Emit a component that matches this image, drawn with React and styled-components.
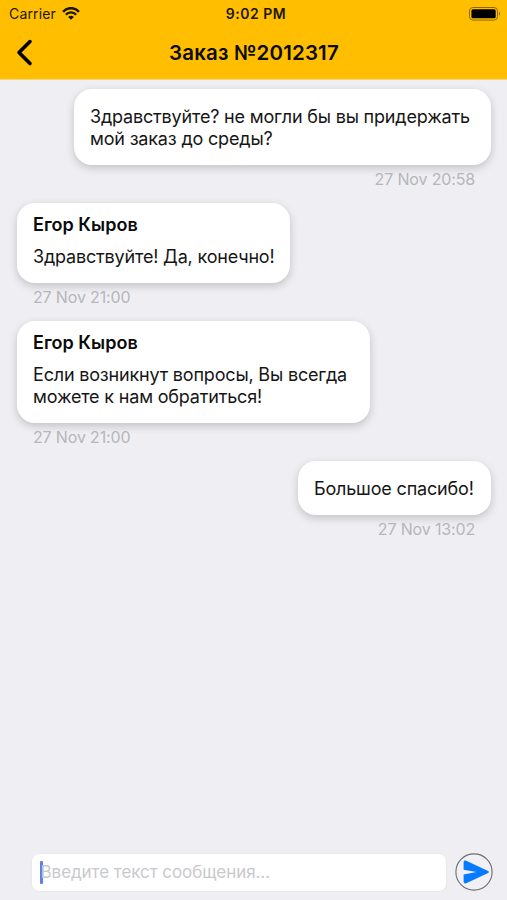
import React, { useState } from "react";
import styled, { createGlobalStyle } from "styled-components";

const messages = [
  {
    id: 1,
    mine: true,
    width: 417,
    text: "Здравствуйте? не могли бы вы придержать\nмой заказ до среды?",
    time: "27 Nov 20:58",
  },
  {
    id: 2,
    author: "Егор Кыров",
    width: 273,
    text: "Здравствуйте! Да, конечно!",
    time: "27 Nov 21:00",
  },
  {
    id: 3,
    author: "Егор Кыров",
    width: 353,
    text: "Если возникнут вопросы, Вы всегда\nможете к нам обратиться!",
    time: "27 Nov 21:00",
  },
  {
    id: 4,
    mine: true,
    width: 193,
    text: "Большое спасибо!",
    time: "27 Nov 13:02",
  },
];

function WifiIcon() {
  return (
    <svg width="18" height="13" viewBox="0 0 18 13" fill="none">
      <path d="M1.1 4.9C5.3 -0.1 12.7 -0.1 16.9 4.9" stroke="#1c1600" strokeWidth="2.5" />
      <path d="M3.9 7.8C6.6 4.6 11.4 4.6 14.1 7.8" stroke="#1c1600" strokeWidth="2.3" />
      <path d="M6.1 9.9C7.7 8.3 10.3 8.3 11.9 9.9L9 12.8Z" fill="#1c1600" />
    </svg>
  );
}

function BatteryIcon() {
  return (
    <svg width="32" height="14" viewBox="0 0 32 14" fill="none">
      <rect x="0.5" y="0.5" width="28" height="12.6" rx="3.4" stroke="#8a6800" />
      <rect x="2.4" y="2.3" width="24.3" height="9" rx="1.6" fill="#000" />
      <path d="M30 4.8C31.4 5.4 31.4 8.2 30 8.8Z" fill="#8a6800" />
    </svg>
  );
}

function Chat() {
  const [draft, setDraft] = useState("");

  return (
    <Wrapper>
      <GlobalStyle />
      <Header>
        <StatusBar>
          <Carrier>
            Carrier
            <WifiIcon />
          </Carrier>
          <Clock>9:02 PM</Clock>
          <Battery>
            <BatteryIcon />
          </Battery>
        </StatusBar>
        <Nav>
          <BackButton aria-label="Назад">
            <svg width="18" height="28" viewBox="0 0 18 28" fill="none">
              <path
                d="M15 2.6L4 13.6L15 24.6"
                stroke="#000"
                strokeWidth="3.6"
                strokeLinecap="round"
                strokeLinejoin="round"
              />
            </svg>
          </BackButton>
          <Title>Заказ №2012317</Title>
        </Nav>
      </Header>

      <Messages>
        {messages.map((msg) => (
          <Message key={msg.id} $mine={msg.mine}>
            <Bubble $named={!!msg.author} $width={msg.width}>
              {msg.author && <Author>{msg.author}</Author>}
              <Text>{msg.text}</Text>
            </Bubble>
            <Time>{msg.time}</Time>
          </Message>
        ))}
      </Messages>

      <Footer>
        <Field>
          <Caret />
          <Input
            value={draft}
            onChange={(e) => setDraft(e.target.value)}
            placeholder="Введите текст сообщения..."
          />
        </Field>
        <SendButton aria-label="Отправить">
          <svg width="38" height="38" viewBox="0 0 38 38" fill="none">
            <circle cx="19" cy="19" r="18.1" fill="#f1f1f5" stroke="#6e6e72" strokeWidth="1.1" />
            <path
              d="M8.6 9.4C8.6 7.8 9.8 7.2 11.2 7.8L33.2 18.1C34.1 18.6 34.1 19.4 33.2 19.9L11.2 30.2C9.8 30.8 8.6 30.2 8.6 28.6V21.4L21.5 19L8.6 16.8Z"
              fill="#087aff"
            />
          </svg>
        </SendButton>
      </Footer>
    </Wrapper>
  );
}

export default Chat;

const GlobalStyle = createGlobalStyle`
  * {
    box-sizing: border-box;
  }

  body {
    margin: 0;
    font-family: Inter, "Liberation Sans", sans-serif;
    background: #efeef3;
  }
`;

const Wrapper = styled.div`
  display: flex;
  flex-direction: column;
  height: 100vh;
  background: #efeef3;
  overflow: hidden;
`;

const Header = styled.div`
  background: #ffbf00;
  height: 80px;
  flex-shrink: 0;
  border-bottom: 1px solid #f3d583;
`;

const StatusBar = styled.div`
  display: grid;
  grid-template-columns: 1fr auto 1fr;
  align-items: center;
  height: 27px;
  padding: 0 6px 0 9px;
  color: #1c1600;
  font-size: 14px;
`;

const Carrier = styled.div`
  display: flex;
  align-items: center;
  gap: 6px;
  letter-spacing: 0.15px;
`;

const Clock = styled.div`
  padding-left: 2px;
  font-size: 14px;
  font-weight: 600;
  letter-spacing: 0.5px;
`;

const Battery = styled.div`
  display: flex;
  justify-content: flex-end;
`;

const Nav = styled.div`
  display: grid;
  grid-template-columns: 48px 1fr 48px;
  align-items: center;
  height: 51px;
`;

const BackButton = styled.button`
  display: flex;
  padding: 0 0 0 15px;
  border: 0;
  background: none;
  cursor: pointer;
`;

const Title = styled.div`
  padding-left: 1px;
  text-align: center;
  font-size: 20.5px;
  font-weight: 600;
  letter-spacing: 0.15px;
  color: #0d0a00;
`;

const Messages = styled.div`
  flex: 1;
  display: flex;
  flex-direction: column;
  gap: 15px;
  padding: 9px 16px 0 17px;
`;

const Message = styled.div`
  display: flex;
  flex-direction: column;
  align-items: ${(props) => (props.$mine ? "flex-end" : "flex-start")};
`;

const Bubble = styled.div`
  width: ${(props) => props.$width}px;
  background: white;
  border-radius: 18px;
  padding: ${(props) => (props.$named ? "10.5px 16px 15.5px" : "16.5px 16px 15.5px")};
  box-shadow: 0 3px 8px rgba(0, 0, 0, 0.19);
`;

const Author = styled.div`
  margin-bottom: 10.5px;
  font-size: 18px;
  font-weight: 600;
  line-height: 21.5px;
  color: #0a0a0a;
`;

const Text = styled.div`
  font-size: 18px;
  line-height: 22px;
  letter-spacing: -0.18px;
  color: #161616;
  white-space: pre;
`;

const Time = styled.div`
  margin-top: 5px;
  padding: 0 16px;
  font-size: 16px;
  line-height: 18px;
  letter-spacing: -0.15px;
  color: #b6b6bb;
`;

const Footer = styled.div`
  display: flex;
  align-items: center;
  gap: 9px;
  padding: 0 14px 9px 32px;
`;

const Field = styled.div`
  flex: 1;
  display: flex;
  align-items: center;
  height: 37px;
  padding-left: 8px;
  background: white;
  border-radius: 7px;
  box-shadow: 0 0 2px rgba(0, 0, 0, 0.08);
`;

const Caret = styled.span`
  width: 2.5px;
  height: 23px;
  margin-right: -2px;
  border-radius: 1px;
  background: #5f80ea;
`;

const Input = styled.input`
  flex: 1;
  min-width: 0;
  padding: 0;
  border: 0;
  outline: none;
  background: none;
  font-family: inherit;
  font-size: 17px;
  letter-spacing: -0.05px;
  color: #161616;

  &::placeholder {
    color: #c9c9cc;
    opacity: 1;
  }
`;

const SendButton = styled.button`
  display: flex;
  padding: 0;
  border: 0;
  background: none;
  cursor: pointer;
`;
